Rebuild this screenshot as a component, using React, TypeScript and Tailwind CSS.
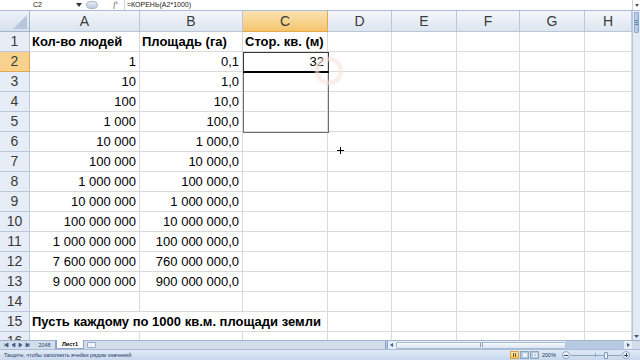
import React from "react";

const cols = [
  { k: "A", w: "w-[110px]" },
  { k: "B", w: "w-[103px]" },
  { k: "C", w: "w-[85px]" },
  { k: "D", w: "w-[64px]" },
  { k: "E", w: "w-[65px]" },
  { k: "F", w: "w-[63px]" },
  { k: "G", w: "w-[65px]" },
  { k: "H", w: "w-[47px]" },
];

const people = [
  "1",
  "10",
  "100",
  "1 000",
  "10 000",
  "100 000",
  "1 000 000",
  "10 000 000",
  "100 000 000",
  "1 000 000 000",
  "7 600 000 000",
  "9 000 000 000",
];

const area = [
  "0,1",
  "1,0",
  "10,0",
  "100,0",
  "1 000,0",
  "10 000,0",
  "100 000,0",
  "1 000 000,0",
  "10 000 000,0",
  "100 000 000,0",
  "760 000 000,0",
  "900 000 000,0",
];

type Cell = { text?: string; right?: boolean; bold?: boolean };

function rowData(r: number): Cell[] {
  const cells: Cell[] = cols.map(() => ({}));
  if (r === 1) {
    cells[0] = { text: "Кол-во людей", bold: true };
    cells[1] = { text: "Площадь (га)", bold: true };
    cells[2] = { text: "Стор. кв. (м)", bold: true };
  } else if (r >= 2 && r <= 13) {
    cells[0] = { text: people[r - 2], right: true };
    cells[1] = { text: area[r - 2], right: true };
    if (r === 2) cells[2] = { text: "32", right: true };
  }
  return cells;
}

function ColHeader() {
  return (
    <div className="flex h-[21px] shrink-0">
      <div className="w-[30px] h-full bg-gradient-to-b from-[#eef3f9] to-[#d6e0ec] border-r border-b border-[#9eb6ce] relative">
        <svg className="absolute right-[2px] bottom-[2px]" width="14" height="14" viewBox="0 0 14 14">
          <polygon points="14,0 14,14 0,14" fill="#b7c6d9" />
        </svg>
      </div>
      {cols.map((c) =>
        c.k === "C" ? (
          <div
            key={c.k}
            className={`${c.w} h-full flex items-center justify-center bg-gradient-to-b from-[#fbe2b0] to-[#f4c56d] border-r border-b border-[#e4a94a] text-[#3b3b3b] text-[14px]`}
          >
            {c.k}
          </div>
        ) : (
          <div
            key={c.k}
            className={`${c.w} h-full flex items-center justify-center bg-gradient-to-b from-[#f3f6fb] to-[#dde5ef] border-r border-b border-[#b9c7d8] text-[#3b3b3b] text-[14px]`}
          >
            {c.k}
          </div>
        )
      )}
    </div>
  );
}

function Row({ r }: { r: number }) {
  const cells = rowData(r);
  const sel = r === 2;
  return (
    <div className="flex h-[20px] shrink-0">
      <div
        className={
          sel
            ? "w-[30px] h-full flex items-center justify-center bg-[#f8d28c] border-r border-b border-[#e0a850] text-[#3b3b3b] text-[14px]"
            : "w-[30px] h-full flex items-center justify-center bg-[#e6edf6] border-r border-b border-[#b9c7d8] text-[#3b3b3b] text-[14px]"
        }
      >
        {r}
      </div>
      {r === 15 ? (
        <>
          <div className="w-[298px] h-full flex items-center pl-[2px] border-r border-b border-[#dadada] whitespace-nowrap font-bold text-[13px] text-black">
            Пусть каждому по 1000 кв.м. площади земли
          </div>
          {cols.slice(3).map((c) => (
            <div key={c.k} className={`${c.w} h-full border-r border-b border-[#dadada]`} />
          ))}
        </>
      ) : (
        cols.map((c, i) => (
          <div
            key={c.k}
            className={`${c.w} h-full flex items-center border-r border-b border-[#dadada] whitespace-nowrap text-[13px] text-black ${
              cells[i].right ? "justify-end pr-[3px]" : "pl-[2px]"
            } ${cells[i].bold ? "font-bold" : ""}`}
          >
            {cells[i].text}
          </div>
        ))
      )}
    </div>
  );
}

function VScroll() {
  return (
    <div className="w-[8px] h-full bg-[#e3eaf4] border-l border-[#b7c8dd] flex flex-col">
      <div className="h-[21px] mx-[1px] mt-[1px] bg-gradient-to-r from-[#c9d8ec] to-[#a9c0de] border border-[#8eaad0] rounded-[1px] flex flex-col items-center justify-center gap-[1px]">
        <div className="w-[3px] h-px bg-[#5f7fa8]" />
        <div className="w-[3px] h-px bg-[#5f7fa8]" />
        <div className="w-[3px] h-px bg-[#5f7fa8]" />
      </div>
      <div className="flex-1" />
      <div className="h-[8px] flex items-center justify-center">
        <svg width="5" height="3" viewBox="0 0 5 3">
          <polygon points="0,0 5,0 2.5,3" fill="#3b5a82" />
        </svg>
      </div>
    </div>
  );
}

export default function App() {
  const rows = Array.from({ length: 16 }, (_, i) => i + 1);
  return (
    <div className="w-[640px] h-[360px] overflow-hidden flex flex-col bg-white font-['Liberation_Sans',Arial,sans-serif]">
      {/* formula bar */}
      <div className="h-[11px] shrink-0 flex items-center bg-white border-b border-[#a9bdd6] text-[7px] text-[#222]">
        <div className="w-[76px] h-full flex items-center pl-[33px]">C2</div>
        <svg width="6" height="4" viewBox="0 0 6 4" className="mr-[4px]">
          <polygon points="0,0 6,0 3,4" fill="#333" />
        </svg>
        <div className="w-[12px] h-[8px] rounded-full bg-gradient-to-b from-[#e8eef6] to-[#bccbdd] border border-[#a9b9cd]" />
        <div className="w-[26px] flex justify-end pr-[6px] italic text-[#555] font-['Liberation_Serif',serif] text-[8px]">
          f<span className="text-[5px] not-italic">x</span>
        </div>
        <div className="flex-1 h-full flex items-center pl-[2px] border-l border-[#c8d3e0]">=КОРЕНЬ(A2*1000)</div>
        <div className="w-[8px] h-full flex items-center justify-center border-l border-[#c8d3e0]">
          <svg width="4" height="5" viewBox="0 0 4 5">
            <polygon points="0,1 4,1 2,4" fill="#555" />
          </svg>
        </div>
      </div>

      {/* grid */}
      <div className="h-[329px] shrink-0 flex">
        <div className="w-[632px] h-full overflow-hidden flex flex-col relative">
          <ColHeader />
          {rows.map((r) => (
            <Row key={r} r={r} />
          ))}
          {/* selection */}
          <div className="absolute left-[243px] top-[41px] w-[86px] h-[81px] border border-[#6e6e6e]" />
          <div className="absolute left-[243px] top-[41px] w-[86px] h-[21px] border border-[#3a3a3a] border-b-2 border-b-black" />
          {/* cursor highlight */}
          <div className="absolute left-[315px] top-[46px] w-[28px] h-[28px] rounded-full border-[4px] border-[#f7e1de] opacity-70 blur-[1px]" />
          {/* plus cursor */}
          <svg className="absolute left-[337px] top-[136px]" width="7" height="7" viewBox="0 0 7 7">
            <rect x="3" y="0" width="1" height="7" fill="#000" />
            <rect x="0" y="3" width="7" height="1" fill="#000" />
          </svg>
        </div>
        <VScroll />
      </div>

      {/* sheet tabs + h scroll */}
      <div className="h-[9px] shrink-0 flex items-stretch bg-[#d3deec] border-t border-[#9fb4cf]">
        <div className="w-[34px] flex items-center justify-around px-[3px]">
          {["M0,0 L0,4 M4,0 L1,2 L4,4Z", "M4,0 L1,2 L4,4Z", "M1,0 L4,2 L1,4Z", "M1,0 L4,2 L1,4Z M4,0 L4,4"].map((d, i) => (
            <svg key={i} width="5" height="5" viewBox="0 0 5 5">
              <path d={d} fill="#3f5b84" stroke="#3f5b84" strokeWidth="0.8" />
            </svg>
          ))}
        </div>
        <div className="w-[22px] flex items-center justify-center text-[5.5px] text-[#2f4a70] border-r border-[#8da6c8]">2048</div>
        <div className="w-[28px] -mt-px flex items-center justify-center bg-white text-[5.5px] font-bold text-black border-x border-b border-[#8da6c8]">
          Лист1
        </div>
        <div className="w-[14px] flex items-center justify-center">
          <div className="w-[9px] h-[6px] bg-[#eef3f9] border border-[#98aecb] rounded-[1px]" />
        </div>
        <div className="flex-1" />
        <div className="w-[3px] bg-[#b6c7de] border-x border-[#8aa3c6]" />
        <div className="w-[244px] flex items-center bg-[#e6edf6]">
          <svg width="8" height="8" viewBox="0 0 8 8">
            <polygon points="5,2 2,4 5,6" fill="#3b5a82" />
          </svg>
          <div className="w-[170px] h-[7px] bg-gradient-to-b from-[#f6f9fd] to-[#dbe5f1] border border-[#a8bcd6] rounded-[1px] flex items-center justify-center">
            <div className="w-[3px] h-[4px] border-x border-[#8aa0bd]" />
          </div>
          <div className="flex-1 h-full bg-[#b8cae2]" />
          <svg width="8" height="8" viewBox="0 0 8 8">
            <polygon points="3,2 6,4 3,6" fill="#3b5a82" />
          </svg>
        </div>
        <div className="w-[8px] bg-[#d3deec]" />
      </div>

      {/* status bar */}
      <div className="h-[11px] shrink-0 flex items-center bg-gradient-to-b from-[#e1eaf6] to-[#c7d7ec] border-t border-[#a8bcd8] text-[5.5px] text-[#1f3b63]">
        <div className="pl-[4px] flex-1">Тащите, чтобы заполнить ячейки рядом значений</div>
        <div className="flex items-center h-full gap-[1px] mr-[3px]">
          <div className="w-[9px] h-[8px] bg-gradient-to-b from-[#fde7b5] to-[#f5c566] border border-[#d9a445] flex items-center justify-center gap-[1px]">
            <div className="w-px h-[4px] bg-[#7a5b1c]" />
            <div className="w-px h-[4px] bg-[#7a5b1c]" />
          </div>
          <div className="w-[9px] h-[8px] bg-[#b9c9de] border border-[#8ea5c4] flex items-center justify-center">
            <div className="w-[4px] h-[4px] bg-[#eef3f9]" />
          </div>
          <div className="w-[9px] h-[8px] bg-[#b9c9de] border border-[#8ea5c4] flex items-center justify-center">
            <div className="w-[4px] h-[4px] border border-[#eef3f9]" />
          </div>
        </div>
        <div className="w-[20px] text-[#1f3b63]">200%</div>
        <div className="w-[8px] h-[8px] rounded-full bg-[#eef3f9] border border-[#8ea5c4] flex items-center justify-center">
          <div className="w-[4px] h-px bg-[#2f4a70]" />
        </div>
        <div className="w-[50px] h-full flex items-center relative mx-[1px]">
          <div className="w-full h-px bg-[#8ea5c4]" />
          <div className="absolute left-[24px] top-[3px] w-[1px] h-[4px] bg-[#8ea5c4]" />
          <div className="absolute left-[33px] top-[2px] w-[4px] h-[7px] bg-[#eef3f9] border border-[#7e96b6] rounded-[1px]" />
        </div>
        <div className="w-[8px] h-[8px] rounded-full bg-[#eef3f9] border border-[#8ea5c4] flex items-center justify-center relative">
          <div className="w-[4px] h-px bg-[#2f4a70]" />
          <div className="absolute w-px h-[4px] bg-[#2f4a70]" />
        </div>
        <div className="w-[10px]" />
      </div>
    </div>
  );
}
